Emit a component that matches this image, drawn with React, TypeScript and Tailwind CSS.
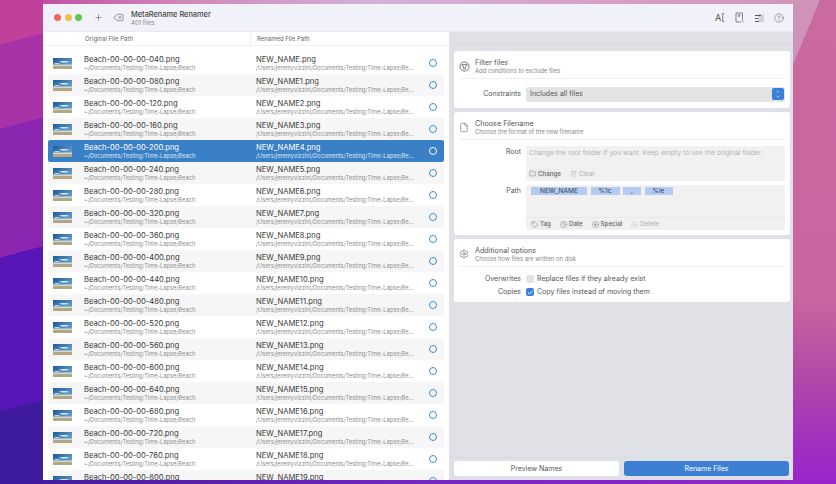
import { CircleHelp, Clock, Delete, File, Folder, Plus, Settings, Tag, Trash2, Check, ChevronUp, ChevronDown, CirclePlus, CircleMinus } from "lucide-react";

const rows = Array.from({ length: 20 }, (_, i) => ({
  original: `Beach-00-00-00-${String((i + 1) * 40).padStart(3, "0")}.png`,
  renamed: `NEW_NAME${i === 0 ? "" : i}.png`,
}));

function Thumb() {
  return (
    <svg viewBox="0 0 19 11" className="w-[19px] h-[11px] shrink-0">
      <defs>
        <linearGradient id="sky" x1="0" y1="0" x2="1" y2="0.6">
          <stop offset="0" stopColor="#1b5a9c" />
          <stop offset="1" stopColor="#5f9bc9" />
        </linearGradient>
      </defs>
      <rect width="19" height="7" fill="url(#sky)" />
      <ellipse cx="11" cy="3.8" rx="4.5" ry="0.8" fill="#e6eef5" />
      <ellipse cx="4" cy="5.6" rx="3" ry="0.5" fill="#cfe0ec" />
      <rect y="6.5" width="19" height="1.5" fill="#d5dcd6" />
      <rect y="8" width="19" height="3" fill="#b5a581" />
    </svg>
  );
}

function Row({ original, renamed, index }: { original: string; renamed: string; index: number }) {
  const selected = index === 4;
  const striped = index % 2 === 1;
  return (
    <div
      className={`h-[22px] flex items-center rounded-[2px] shrink-0 ${
        selected ? "bg-[#3a80c6]" : striped ? "bg-[#f6f6f6]" : "bg-white"
      }`}
    >
      <div className="w-[36px] pl-[5px] shrink-0">
        <Thumb />
      </div>
      <div className="w-[172px] shrink-0 pt-[1px]">
        <div className={`text-[7.6px] leading-[9px] ${selected ? "text-white" : "text-[#3a3a3a]"}`}>{original}</div>
        <div className={`text-[5.7px] leading-[8px] ${selected ? "text-[#dbe8f5]" : "text-[#8d8d8d]"}`}>
          ~/Documents/Testing/Time-Lapse/Beach
        </div>
      </div>
      <div className="w-[173px] shrink-0 pt-[1px]">
        <div className={`text-[7.6px] leading-[9px] ${selected ? "text-white" : "text-[#3a3a3a]"}`}>{renamed}</div>
        <div className={`text-[5.7px] leading-[8px] whitespace-nowrap ${selected ? "text-[#dbe8f5]" : "text-[#8d8d8d]"}`}>
          /Users/jeremyvizzini/Documents/Testing/Time-Lapse/Be...
        </div>
      </div>
      <div
        className={`w-[8px] h-[8px] rounded-full border shrink-0 ${selected ? "border-white" : "border-[#3f8fd6]"}`}
      />
    </div>
  );
}

function CardHead({ icon, title, subtitle }: { icon: React.ReactNode; title: string; subtitle: string }) {
  return (
    <div className="h-[28px] mx-[5px] pt-[3px] flex items-center border-b border-[#f0f0f2]">
      <div className="w-[10px] flex justify-center shrink-0 text-[#444]">{icon}</div>
      <div className="ml-[6px]">
        <div className="text-[7.2px] leading-[9px] text-[#555]">{title}</div>
        <div className="text-[5.9px] leading-[8px] text-[#8a8a8a]">{subtitle}</div>
      </div>
    </div>
  );
}

function Token({ text, width }: { text: string; width: string }) {
  return (
    <div className={`h-[8px] ${width} bg-[#b4cbf2] text-[#31415f] text-[6.6px] leading-[8px] text-center`}>{text}</div>
  );
}

function ToolBtn({ icon, text, muted }: { icon: React.ReactNode; text: string; muted?: boolean }) {
  return (
    <div
      className={`flex items-center gap-[2px] text-[6.2px] font-medium h-[9px] rounded-[2px] ${
        muted ? "text-[#b5b5b5]" : "text-[#666] bg-[#ebebeb]"
      }`}
    >
      {icon}
      <span>{text}</span>
    </div>
  );
}

export default function App() {
  return (
    <div className="w-[836px] h-[484px] overflow-hidden pt-[4px] pl-[43px] font-['Inter',sans-serif] [background:linear-gradient(165deg,#c0409c_0%,#c0409c_9%,#a832a8_9%,#a832a8_26%,#8a26b0_26%,#8a26b0_52%,#5815b8_52%,#5815b8_83%,#3e1a9c_83%)_0_0/43px_484px_no-repeat,linear-gradient(112.6deg,#d093b8_0%,#d093b8_11%,transparent_11%)_100%_0/43px_484px_no-repeat,linear-gradient(180deg,#c96aa0_0%,#c9659f_62%,#b04aa8_78%,#a030c0_92%,#9a25cc_100%)_100%_0/43px_484px_no-repeat,linear-gradient(90deg,#c0409c_0%,#d088b8_22%,#d3b2d8_45%,#d8a0c8_70%,#d093b8_100%)_0_0/100%_4px_no-repeat,linear-gradient(90deg,#3e1a9c_0%,#7526c4_50%,#9a25cc_100%)_0_100%/100%_4px_no-repeat]">
      <div className="relative w-[750px] h-[476px] flex flex-col bg-white overflow-hidden">
        <div className="h-[28px] shrink-0 bg-[#f1f1f9] flex items-center border-b border-[#e9e9ef]">
          <div className="flex gap-[3.5px] ml-[11px]">
            <span className="w-[7px] h-[7px] rounded-full bg-[#ee6a5f]" />
            <span className="w-[7px] h-[7px] rounded-full bg-[#f5bd4f]" />
            <span className="w-[7px] h-[7px] rounded-full bg-[#61c554]" />
          </div>
          <Plus className="w-[9px] h-[9px] ml-[12px] text-[#555]" strokeWidth={1.5} />
          <Delete className="w-[11px] h-[11px] ml-[10px] text-[#555]" strokeWidth={1.3} />
          <div className="ml-[7px]">
            <div className="text-[7.4px] leading-[9px] font-medium text-[#444]">MetaRename Renamer</div>
            <div className="text-[6px] leading-[7px] text-[#888]">401 files</div>
          </div>
          <div className="ml-auto flex items-center gap-[10px] mr-[9px] text-[#555]">
            <span className="text-[9px] leading-none w-[10px]">A[</span>
            <svg viewBox="0 0 10 11" className="w-[10px] h-[11px]" fill="none" stroke="currentColor" strokeWidth="0.7">
              <path d="M7.5 8V1H1v9h5" />
              <circle cx="4" cy="3.5" r="1" />
              <path d="M7 8.5l2 2" />
            </svg>
            <svg viewBox="0 0 9 8" className="w-[9px] h-[8px]">
              <rect x="3" y="0" width="6" height="8" fill="#d2d3d8" />
              <path d="M0 1h6v1H0zM0 4h3v1H0zM0 7h4v1H0z" fill="#555" />
            </svg>
            <CircleHelp className="w-[10px] h-[10px]" strokeWidth={1.2} />
          </div>
        </div>
        <div className="flex-1 flex min-h-0">
          <div className="w-[406px] shrink-0 flex flex-col">
            <div className="h-[14px] shrink-0 flex items-center border-b border-[#f0f0f0] text-[6px] text-[#666]">
              <div className="w-[208px] pl-[42px] border-r border-[#eee] h-[10px] leading-[10px] shrink-0">Original File Path</div>
              <div className="pl-[6px] h-[10px] leading-[10px]">Renamed File Path</div>
            </div>
            <div className="flex flex-col pt-[6px] px-[5px]">
              {rows.map((r, i) => (
                <Row key={r.original} index={i} original={r.original} renamed={r.renamed} />
              ))}
            </div>
          </div>
          <div className="flex-1 bg-[#e0e1e6] flex flex-col">
            <div className="h-[13px] shrink-0 border-b border-[#dcdde2]" />
            <div className="flex-1 flex flex-col gap-[4px] pt-[6px] pl-[5px] pr-[3px]">
              <div className="h-[57px] bg-white rounded-[3px]">
                <CardHead
                  icon={
                    <svg viewBox="0 0 12 12" className="w-[11px] h-[11px] shrink-0" fill="none" stroke="currentColor" strokeWidth="0.8">
                      <circle cx="6" cy="6" r="5" />
                      <path d="M3 4h6L7 6.6V8.4H5V6.6Z" />
                    </svg>
                  }
                  title="Filter files"
                  subtitle="Add conditions to exclude files"
                />
                <div className="flex items-center h-[29px] pt-[1px]">
                  <div className="w-[67px] text-right text-[7px] text-[#555] shrink-0">Constraints</div>
                  <div className="ml-[5px] w-[259px] h-[15px] rounded-[2px] bg-[#e4e4e4] flex items-center justify-between pl-[4px] pr-[1px]">
                    <span className="text-[7px] text-[#555]">Includes all files</span>
                    <div className="w-[12px] h-[12px] rounded-[2px] bg-[#3a80d8] flex flex-col items-center justify-center text-white">
                      <ChevronUp className="w-[6px] h-[5px]" strokeWidth={2.5} />
                      <ChevronDown className="w-[6px] h-[5px]" strokeWidth={2.5} />
                    </div>
                  </div>
                </div>
              </div>
              <div className="h-[123px] bg-white rounded-[3px]">
                <CardHead
                  icon={<File className="w-[10px] h-[11px]" strokeWidth={1.1} />}
                  title="Choose Filename"
                  subtitle="Choose the format of the new filename"
                />
                <div className="flex pt-[6px]">
                  <div className="w-[67px] text-right text-[7px] text-[#555] shrink-0 pt-[1px]">Root</div>
                  <div className="ml-[5px] w-[259px] h-[35px] bg-[#f1f1f1] rounded-[2px] flex flex-col justify-between px-[3px] py-[2px]">
                    <div className="text-[6.8px] text-[#b4b4b4] whitespace-nowrap">
                      Change the root folder if you want. Keep empty to use the original folder.
                    </div>
                    <div className="flex gap-[9px] pb-[1px]">
                      <ToolBtn icon={<Folder className="w-[7px] h-[7px]" strokeWidth={1.3} />} text="Change" />
                      <ToolBtn icon={<Trash2 className="w-[7px] h-[7px]" strokeWidth={1.3} />} text="Clear" muted />
                    </div>
                  </div>
                </div>
                <div className="flex pt-[4px]">
                  <div className="w-[67px] text-right text-[7px] text-[#555] shrink-0 pt-[1px]">Path</div>
                  <div className="ml-[5px] w-[259px] h-[45px] bg-[#f1f1f1] rounded-[2px] flex flex-col justify-between">
                    <div className="flex gap-[3.5px] pt-[2px] px-[5px]">
                      <Token text="NEW_NAME" width="w-[56px]" />
                      <Token text="%1c" width="w-[29px]" />
                      <Token text="," width="w-[18px]" />
                      <Token text="%le" width="w-[28px]" />
                    </div>
                    <div className="flex gap-[9px] border-t border-[#e8e8e8] h-[13px] items-center px-[5px]">
                      <ToolBtn icon={<Tag className="w-[7px] h-[7px]" strokeWidth={1.3} />} text="Tag" />
                      <ToolBtn icon={<Clock className="w-[7px] h-[7px]" strokeWidth={1.3} />} text="Date" />
                      <ToolBtn icon={<CirclePlus className="w-[7px] h-[7px]" strokeWidth={1.3} />} text="Special" />
                      <ToolBtn icon={<CircleMinus className="w-[7px] h-[7px]" strokeWidth={1.3} />} text="Delete" muted />
                    </div>
                  </div>
                </div>
              </div>
              <div className="h-[63px] bg-white rounded-[3px]">
                <CardHead
                  icon={<Settings className="w-[10px] h-[10px]" strokeWidth={1.2} />}
                  title="Additional options"
                  subtitle="Choose how files are written on disk"
                />
                <div className="flex flex-col gap-[3px] pt-[7px]">
                  <div className="flex items-center h-[10px]">
                    <div className="w-[67px] text-right text-[7px] text-[#555] shrink-0">Overwrites</div>
                    <div className="ml-[5px] w-[8px] h-[8px] rounded-[2px] bg-[#e3e3e3]" />
                    <span className="ml-[3px] text-[7px] text-[#555]">Replace files if they already exist</span>
                  </div>
                  <div className="flex items-center h-[10px]">
                    <div className="w-[67px] text-right text-[7px] text-[#555] shrink-0">Copies</div>
                    <div className="ml-[5px] w-[8px] h-[8px] rounded-[2px] bg-[#3a80d8] flex items-center justify-center">
                      <Check className="w-[7px] h-[7px] text-white" strokeWidth={3} />
                    </div>
                    <span className="ml-[3px] text-[7px] text-[#555]">Copy files instead of moving them</span>
                  </div>
                </div>
              </div>
            </div>
            <div className="h-[23px] shrink-0 border-t border-[#d9dadf] flex gap-[5px] pl-[5px] pr-[4px] pt-[3px]">
              <div className="w-[165px] h-[15px] rounded-[3px] bg-white text-center text-[7px] leading-[15px] text-[#555]">Preview Names</div>
              <div className="w-[165px] h-[15px] rounded-[3px] bg-[#3d80d3] text-center text-[7px] leading-[15px] text-white">Rename Files</div>
            </div>
          </div>
        </div>
      </div>
    </div>
  );
}
